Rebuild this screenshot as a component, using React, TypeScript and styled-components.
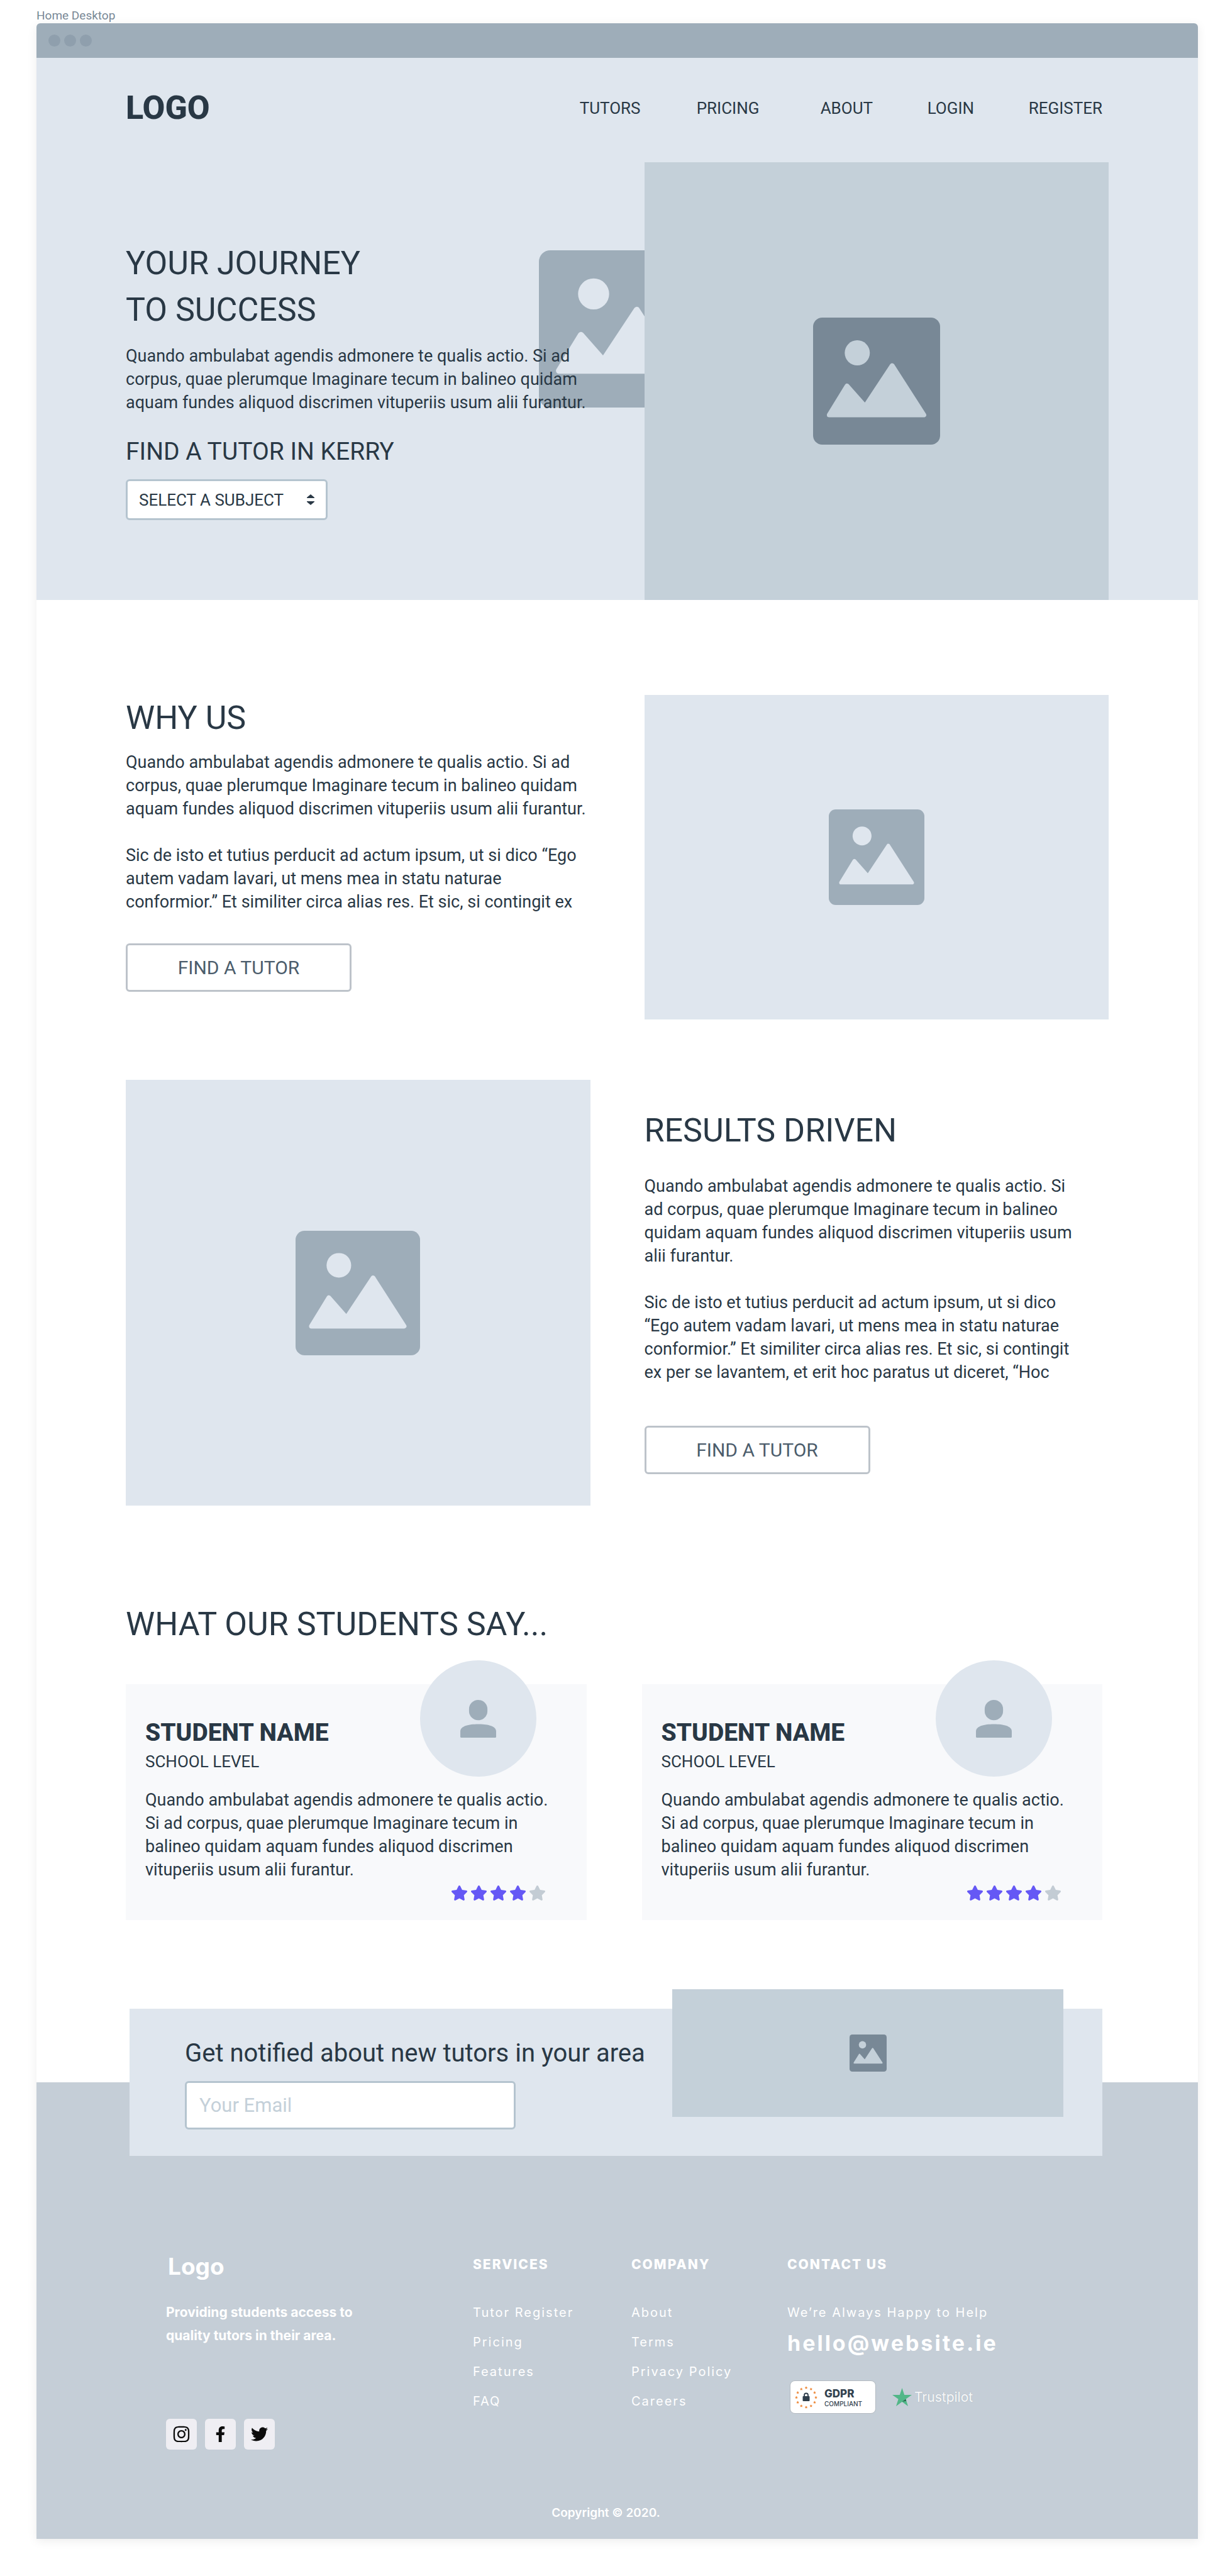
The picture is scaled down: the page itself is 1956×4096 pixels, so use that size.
import React from "react";
import styled, { createGlobalStyle } from "styled-components";
import { FaFacebookF, FaInstagram, FaStar, FaTwitter } from "react-icons/fa";

const ink = "#293845";
const slate = "#788896";
const steel = "#9eadb9";
const mist = "#dfe6ee";
const fog = "#c4d0d9";
const displayFont = `Roboto, "Liberation Sans", sans-serif`;
const footerFont = `Inter, "Liberation Sans", sans-serif`;

const GlobalStyle = createGlobalStyle`
  *, *::before, *::after { box-sizing: border-box; }
  body { margin: 0; background: #fff; color: ${ink}; font-family: ${displayFont}; font-weight: 450; }
  h1, h2, h3, h4, p, ul { margin: 0; padding: 0; font-weight: 450; }
  ul { list-style: none; }
  a { color: inherit; text-decoration: none; }
  svg { display: block; }
`;

const Page = styled.div`
  padding: 13px 51px 58px 58px;
`;

const FrameLabel = styled.div`
  font-size: 19px;
  line-height: 24px;
  color: ${slate};
`;

const Frame = styled.div`
  background: #fff;
  border-radius: 6px 6px 0 0;
  box-shadow: 0 3px 16px rgba(0, 0, 0, 0.08);
`;

const TitleBar = styled.div`
  display: flex;
  align-items: center;
  gap: 6px;
  height: 55px;
  padding: 0 19px;
  background: ${steel};
  border-radius: 6px 6px 0 0;
`;

const Dot = styled.span`
  width: 19px;
  height: 19px;
  border-radius: 50%;
  background: #8f9fad;
`;

const Hero = styled.div`
  background: ${mist};
`;

const Header = styled.header`
  display: flex;
  align-items: center;
  justify-content: space-between;
  height: 166px;
  padding: 0 152px 6px 142px;
`;

const Brand = styled.a`
  font-size: 52px;
  line-height: 60px;
  font-weight: 800;
`;

const Nav = styled.nav`
  display: grid;
  grid-template-columns: 186px 197px 170px 161px auto;
  font-size: 26px;
  line-height: 34px;
`;

const Columns = styled.section<{ $top?: number }>`
  display: grid;
  grid-template-columns: minmax(0, 1fr) minmax(0, 1fr);
  gap: 86px;
  padding: ${(p) => p.$top ?? 0}px 142px 0;
`;

const TextColumn = styled.div<{ $top?: number }>`
  position: relative;
  display: flex;
  flex-direction: column;
  align-items: flex-start;
  padding-top: ${(p) => p.$top ?? 0}px;
`;

const Title = styled.h2`
  position: relative;
  font-size: 52px;
  line-height: 74px;
`;

const Subtitle = styled.h2`
  margin: 36px 0 21px;
  font-size: 39px;
  line-height: 46px;
`;

const Copy = styled.p<{ $top: number }>`
  position: relative;
  width: max-content;
  max-width: calc(100% + 40px);
  margin-top: ${(p) => p.$top}px;
  font-size: 27px;
  line-height: 37px;
  white-space: pre-line;
`;

const Backdrop = styled.div`
  position: absolute;
  top: 140px;
  right: -168px;
`;

const Picture = styled.div<{ $height: number; $fill?: string }>`
  position: relative;
  display: flex;
  align-items: center;
  justify-content: center;
  height: ${(p) => p.$height}px;
  background: ${(p) => p.$fill ?? mist};
`;

const SelectBox = styled.div`
  position: relative;
  width: 321px;

  svg {
    position: absolute;
    top: 24px;
    right: 21px;
    pointer-events: none;
  }
`;

const Select = styled.select`
  appearance: none;
  display: block;
  width: 100%;
  height: 65px;
  padding: 0 18px;
  border: 3px solid #b5c4cf;
  border-radius: 6px;
  background: #fff;
  color: ${ink};
  font: 450 26px ${displayFont};
`;

const OutlineButton = styled.button<{ $top: number }>`
  width: 359px;
  height: 77px;
  margin-top: ${(p) => p.$top}px;
  padding: 0;
  border: 3px solid #bdc3ca;
  border-radius: 6px;
  background: #fff;
  color: #4c5d6c;
  font: 450 30px ${displayFont};
`;

const Reviews = styled.section`
  padding: 152px 152px 0 142px;
`;

const ReviewGrid = styled.div`
  display: grid;
  grid-template-columns: minmax(0, 1fr) minmax(0, 1fr);
  gap: 88px;
  margin-top: 58px;
`;

const Card = styled.article`
  position: relative;
  padding: 54px 31px 31px;
  background: #f8f9fb;
`;

const Avatar = styled.div`
  position: absolute;
  top: -38px;
  right: 80px;
  display: flex;
  align-items: center;
  justify-content: center;
  width: 185px;
  height: 185px;
  border-radius: 50%;
  background: ${mist};
`;

const Name = styled.h3`
  font-size: 39px;
  line-height: 46px;
  font-weight: 800;
`;

const Level = styled.p`
  margin-top: 6px;
  font-size: 26px;
  line-height: 34px;
`;

const Stars = styled.div`
  display: flex;
  justify-content: flex-end;
  gap: 4px;
  margin-top: 6px;
  padding-right: 34px;
`;

const Star = styled(FaStar)<{ $on: boolean }>`
  width: 27px;
  height: 24px;
  color: ${(p) => (p.$on ? "#6558f5" : "#c3ccd4")};
`;

const Newsletter = styled.section`
  position: relative;
  z-index: 1;
  display: grid;
  grid-template-columns: minmax(0, 1fr) 622px;
  align-items: start;
  margin: 141px 152px 0 148px;
  padding: 0 62px 0 88px;
  background: ${mist};
`;

const Signup = styled.form`
  padding: 47px 0 42px;
`;

const SignupLabel = styled.label`
  display: block;
  font-size: 40px;
  line-height: 48px;
`;

const EmailInput = styled.input`
  display: block;
  width: 526px;
  height: 77px;
  margin-top: 20px;
  padding: 0 20px;
  border: 3px solid #b5c4cf;
  border-radius: 6px;
  background: #fff;
  color: ${ink};
  font: 450 31px ${displayFont};

  &::placeholder {
    color: ${fog};
    opacity: 1;
  }
`;

const NewsletterArt = styled.div`
  margin-top: -31px;
`;

const Footer = styled.footer`
  margin-top: -117px;
  padding: 271px 242px 28px 206px;
  background: #c5ced7;
  color: #fff;
  font-family: ${footerFont};
`;

const FooterGrid = styled.div`
  display: grid;
  grid-template-columns: 488fr 252fr 248fr 411fr;
`;

const FooterBrand = styled.a`
  display: block;
  padding-left: 3px;
  font-size: 37px;
  line-height: 44px;
  font-weight: 700;
`;

const Tagline = styled.p`
  margin-top: 32px;
  font-size: 21px;
  line-height: 37px;
  font-weight: 700;
  white-space: pre-line;
`;

const Socials = styled.div`
  display: flex;
  gap: 13px;
  margin-top: 114px;
`;

const Social = styled.a`
  display: flex;
  align-items: center;
  justify-content: center;
  width: 49px;
  height: 49px;
  border-radius: 6px;
  background: #efeef3;
  color: #0c0c0c;
`;

const FooterColumn = styled.div`
  padding-top: 5px;
`;

const FooterHeading = styled.h4`
  margin-bottom: 48px;
  font-size: 21px;
  line-height: 28px;
  font-weight: 800;
  letter-spacing: 2px;
`;

const FooterLinks = styled.ul`
  display: flex;
  flex-direction: column;
  gap: 19px;
  font-size: 20px;
  line-height: 28px;
  font-weight: 400;
  letter-spacing: 2px;
`;

const FooterText = styled.p`
  font-size: 20px;
  line-height: 28px;
  font-weight: 400;
  letter-spacing: 2px;
`;

const Email = styled.a`
  display: block;
  margin-top: 14px;
  font-size: 34px;
  line-height: 42px;
  font-weight: 700;
  letter-spacing: 3px;
`;

const Badges = styled.div`
  display: flex;
  align-items: center;
  gap: 26px;
  margin: 38px 0 0 4px;
`;

const Gdpr = styled.div`
  display: flex;
  align-items: center;
  gap: 11px;
  width: 137px;
  height: 53px;
  padding-left: 7px;
  border: 1px solid #b3bac1;
  border-radius: 8px;
  background: #fff;
  color: #33424f;
`;

const GdprName = styled.div`
  font-size: 17px;
  line-height: 20px;
  font-weight: 800;
`;

const GdprNote = styled.div`
  font-size: 10px;
  line-height: 12px;
  font-weight: 500;
`;

const Trustpilot = styled.div`
  display: flex;
  align-items: center;
  gap: 4px;
  color: #f8f9fa;
  font-size: 21px;
  line-height: 28px;
  font-weight: 400;
  text-shadow: 0 0 1px #98a2ab;
`;

const Copyright = styled.p`
  margin-top: 88px;
  font-size: 19px;
  line-height: 26px;
  font-weight: 600;
  text-align: center;
`;

function ImageIcon({ size, dark, cut = mist }: { size: number; dark?: boolean; cut?: string }) {
  return (
    <svg width={size} height={size} viewBox="0 0 263 263" aria-hidden="true">
      <rect width="263" height="263" rx="19" fill={dark ? slate : steel} />
      <circle cx="91.5" cy="73" r="26" fill={cut} />
      <path
        d="M33.5 201.5L70.3 141.5L107.8 183.9L163.7 99.5L229.3 201.5Z"
        fill={cut}
        stroke={cut}
        strokeWidth="10"
        strokeLinejoin="round"
      />
    </svg>
  );
}

function PersonIcon() {
  return (
    <svg width="57" height="60" viewBox="0 0 74 78" fill={steel} aria-hidden="true">
      <rect x="18" width="38" height="42" rx="19" />
      <path d="M0 76V65C0 54 17 50 37 50S74 54 74 65V76Q74 78 72 78H2Q0 78 0 76Z" />
    </svg>
  );
}

function SelectArrows() {
  return (
    <svg width="12" height="17" viewBox="0 0 12 17" fill={ink} aria-hidden="true">
      <path d="M6 0L12 5V6H0V5Z" />
      <path d="M6 17L12 12V11H0V12Z" />
    </svg>
  );
}

function GdprSeal() {
  return (
    <svg width="36" height="36" viewBox="0 0 36 36" aria-hidden="true">
      {Array.from({ length: 12 }, (_, i) => (
        <path
          key={i}
          transform={`translate(${18 + 15.5 * Math.sin((i * Math.PI) / 6)} ${18 - 15.5 * Math.cos((i * Math.PI) / 6)})`}
          d="M0 -2.2L.8 -.7L2.3 -.6L1.2 .5L1.5 2.1L0 1.4L-1.5 2.1L-1.2 .5L-2.3 -.6L-.8 -.7Z"
          fill="#ee8a3c"
        />
      ))}
      <rect x="12.5" y="16" width="11" height="8" rx="1" fill="#2f3e4b" />
      <path d="M15 16.5V14.5A3 3 0 0 1 21 14.5V16.5" fill="none" stroke="#2f3e4b" strokeWidth="1.8" />
    </svg>
  );
}

function TrustStar() {
  return (
    <svg width="31" height="29" viewBox="0 0 31 29" aria-hidden="true">
      <path d="M15.5 0L19.2 11H31L21.4 17.8L25 29L15.5 22.1L6 29L9.6 17.8L0 11H11.8Z" fill="#52b788" />
      <path d="M21.4 17.8L22.3 20.4L15.5 22.1Z" fill="#26664b" />
    </svg>
  );
}

const reviewText =
  "Quando ambulabat agendis admonere te qualis actio.\nSi ad corpus, quae plerumque Imaginare tecum in\nbalineo quidam aquam fundes aliquod discrimen\nvituperiis usum alii furantur.";

const introText =
  "Quando ambulabat agendis admonere te qualis actio. Si ad\ncorpus, quae plerumque Imaginare tecum in balineo quidam\naquam fundes aliquod discrimen vituperiis usum alii furantur.";

const whyText = `${introText}\n\nSic de isto et tutius perducit ad actum ipsum, ut si dico “Ego\nautem vadam lavari, ut mens mea in statu naturae\nconformior.” Et similiter circa alias res. Et sic, si contingit ex`;

const resultsText =
  "Quando ambulabat agendis admonere te qualis actio. Si\nad corpus, quae plerumque Imaginare tecum in balineo\nquidam aquam fundes aliquod discrimen vituperiis usum\nalii furantur.\n\nSic de isto et tutius perducit ad actum ipsum, ut si dico\n“Ego autem vadam lavari, ut mens mea in statu naturae\nconformior.” Et similiter circa alias res. Et sic, si contingit\nex per se lavantem, et erit hoc paratus ut diceret, “Hoc";

function ReviewCard() {
  return (
    <Card>
      <Avatar>
        <PersonIcon />
      </Avatar>
      <Name>STUDENT NAME</Name>
      <Level>SCHOOL LEVEL</Level>
      <Copy $top={26}>{reviewText}</Copy>
      <Stars role="img" aria-label="4 out of 5 stars">
        {[1, 2, 3, 4, 5].map((n) => (
          <Star key={n} $on={n <= 4} />
        ))}
      </Stars>
    </Card>
  );
}

function LinkColumn({ title, links }: { title: string; links: string[] }) {
  return (
    <FooterColumn>
      <FooterHeading>{title}</FooterHeading>
      <FooterLinks>
        {links.map((link) => (
          <li key={link}>
            <a href="#">{link}</a>
          </li>
        ))}
      </FooterLinks>
    </FooterColumn>
  );
}

export default function App() {
  return (
    <Page>
      <GlobalStyle />
      <FrameLabel>Home Desktop</FrameLabel>
      <Frame>
        <TitleBar>
          <Dot />
          <Dot />
          <Dot />
        </TitleBar>

        <Hero>
          <Header>
            <Brand href="#">LOGO</Brand>
            <Nav>
              {["TUTORS", "PRICING", "ABOUT", "LOGIN", "REGISTER"].map((item) => (
                <a key={item} href="#">
                  {item}
                </a>
              ))}
            </Nav>
          </Header>
          <Columns>
            <TextColumn $top={124}>
              <Backdrop>
                <ImageIcon size={250} />
              </Backdrop>
              <Title as="h1">
                YOUR JOURNEY
                <br />
                TO SUCCESS
              </Title>
              <Copy $top={18}>{introText}</Copy>
              <Subtitle>
                <label htmlFor="subject">FIND A TUTOR IN KERRY</label>
              </Subtitle>
              <SelectBox>
                <Select id="subject" defaultValue="">
                  <option value="">SELECT A SUBJECT</option>
                </Select>
                <SelectArrows />
              </SelectBox>
            </TextColumn>
            <Picture $height={696} $fill={fog}>
              <ImageIcon size={202} dark cut={fog} />
            </Picture>
          </Columns>
        </Hero>

        <Columns $top={151}>
          <TextColumn>
            <Title>WHY US</Title>
            <Copy $top={15}>{whyText}</Copy>
            <OutlineButton type="button" $top={47}>
              FIND A TUTOR
            </OutlineButton>
          </TextColumn>
          <Picture $height={516}>
            <ImageIcon size={152} />
          </Picture>
        </Columns>

        <Columns $top={96}>
          <Picture $height={677}>
            <ImageIcon size={198} />
          </Picture>
          <TextColumn $top={44}>
            <Title>RESULTS DRIVEN</Title>
            <Copy $top={33}>{resultsText}</Copy>
            <OutlineButton type="button" $top={66}>
              FIND A TUTOR
            </OutlineButton>
          </TextColumn>
        </Columns>

        <Reviews>
          <Title>WHAT OUR STUDENTS SAY...</Title>
          <ReviewGrid>
            <ReviewCard />
            <ReviewCard />
          </ReviewGrid>
        </Reviews>

        <Newsletter>
          <Signup>
            <SignupLabel htmlFor="email">Get notified about new tutors in your area</SignupLabel>
            <EmailInput id="email" type="email" placeholder="Your Email" />
          </Signup>
          <NewsletterArt>
            <Picture $height={203} $fill={fog}>
              <ImageIcon size={59} dark cut={fog} />
            </Picture>
          </NewsletterArt>
        </Newsletter>

        <Footer>
          <FooterGrid>
            <div>
              <FooterBrand href="#">Logo</FooterBrand>
              <Tagline>{"Providing students access to\nquality tutors in their area."}</Tagline>
              <Socials>
                <Social href="#" aria-label="Instagram">
                  <FaInstagram size={29} />
                </Social>
                <Social href="#" aria-label="Facebook">
                  <FaFacebookF size={25} />
                </Social>
                <Social href="#" aria-label="Twitter">
                  <FaTwitter size={27} />
                </Social>
              </Socials>
            </div>
            <LinkColumn title="SERVICES" links={["Tutor Register", "Pricing", "Features", "FAQ"]} />
            <LinkColumn title="COMPANY" links={["About", "Terms", "Privacy Policy", "Careers"]} />
            <FooterColumn>
              <FooterHeading>CONTACT US</FooterHeading>
              <FooterText>We’re Always Happy to Help</FooterText>
              <Email href="mailto:hello@website.ie">hello@website.ie</Email>
              <Badges>
                <Gdpr>
                  <GdprSeal />
                  <div>
                    <GdprName>GDPR</GdprName>
                    <GdprNote>COMPLIANT</GdprNote>
                  </div>
                </Gdpr>
                <Trustpilot>
                  <TrustStar />
                  Trustpilot
                </Trustpilot>
              </Badges>
            </FooterColumn>
          </FooterGrid>
          <Copyright>Copyright © 2020.</Copyright>
        </Footer>
      </Frame>
    </Page>
  );
}
